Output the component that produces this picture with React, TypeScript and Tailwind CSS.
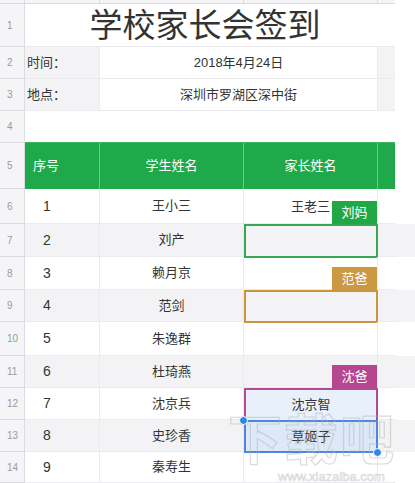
import React from 'react';

const FONT = "font-['Liberation_Sans','Noto_Sans_CJK_SC',sans-serif]";

type Row = {
  n: number;
  no: string;
  student: string;
  stripe?: boolean;
  h: string;
};

const rows: Row[] = [
  { n: 6, no: '1', student: '王小三', h: 'h-[35px]' },
  { n: 7, no: '2', student: '刘产', stripe: true, h: 'h-[33px]' },
  { n: 8, no: '3', student: '赖月京', h: 'h-[33px]' },
  { n: 9, no: '4', student: '范剑', stripe: true, h: 'h-[32px]' },
  { n: 10, no: '5', student: '朱逸群', h: 'h-[34px]' },
  { n: 11, no: '6', student: '杜琦燕', stripe: true, h: 'h-[32px]' },
  { n: 12, no: '7', student: '沈京兵', h: 'h-[32px]' },
  { n: 13, no: '8', student: '史珍香', stripe: true, h: 'h-[32px]' },
  { n: 14, no: '9', student: '秦寿生', h: 'h-[31px]' },
];

const RowHead = ({ n }: { n?: number }) => (
  <div className="w-[25px] shrink-0 bg-[#f5f5f7] border-r border-b border-[#dcdce0] flex items-center pl-[7px] text-[10px] text-[#9a9a9e]">
    {n}
  </div>
);

const Tag = ({ label, color }: { label: string; color: string }) => (
  <div className={`absolute right-0 bottom-[-1px] w-[45px] h-[23px] z-10 flex items-center justify-center text-[13px] text-white ${color}`}>
    {label}
  </div>
);

const ParentCell = ({ n }: { n: number }) => {
  const base = 'relative w-[134px] shrink-0 border-r border-b border-[#ebebee] text-[13px] text-[#333]';
  if (n === 6)
    return (
      <div className={`${base} flex items-center justify-end pr-[47px] pt-[2px]`}>
        王老三
        <Tag label="刘妈" color="bg-[#21a845]" />
      </div>
    );
  if (n === 7) return <div className={`${base} border-b-0`}><div className="absolute inset-[0_-1px_-1px_0] border-2 border-[#3aa757] bg-[#f3f3f5]" /></div>;
  if (n === 8)
    return (
      <div className={base}>
        <Tag label="范爸" color="bg-[#cb9844]" />
      </div>
    );
  if (n === 9) return <div className={`${base} border-b-0`}><div className="absolute inset-[0_-1px_-1px_0] border-2 border-[#c9963f] bg-[#f3f3f5]" /></div>;
  if (n === 11)
    return (
      <div className={base}>
        <Tag label="沈爸" color="bg-[#b6468f]" />
      </div>
    );
  if (n === 12)
    return (
      <div className={`${base} border-b-0`}>
        <div className="absolute inset-[0_-1px_0_0] border-2 border-b-0 border-[#b34b92] bg-[#e8f0fc] flex items-center justify-center">沈京智</div>
      </div>
    );
  if (n === 13)
    return (
      <div className={`${base} border-b-0`}>
        <div className="absolute inset-[0_-1px_-1px_0] border-2 border-[#4e86dc] bg-[#dde9f8] flex items-center justify-center">草姬子</div>
        <div className="absolute left-[-5px] top-[-4px] w-[9px] h-[9px] rounded-full bg-[#2f87e2] border border-white z-10" />
        <div className="absolute right-[-5px] bottom-[-5px] w-[9px] h-[9px] rounded-full bg-[#2f87e2] border border-white z-10" />
      </div>
    );
  return <div className={base} />;
};

export default function App() {
  return (
    <div className={`relative w-[415px] h-[483px] overflow-hidden bg-white ${FONT}`}>
      {/* column header strip */}
      <div className="flex h-[4px]">
        <div className="w-[25px] bg-[#f5f5f7] border-r border-b border-[#dcdce0]" />
        <div className="w-[75px] bg-[#f5f5f7] border-r border-b border-[#dcdce0]" />
        <div className="w-[144px] bg-[#f5f5f7] border-r border-b border-[#dcdce0]" />
        <div className="w-[134px] bg-[#f5f5f7] border-r border-b border-[#dcdce0]" />
        <div className="w-[17px] bg-[#f5f5f7] border-b border-[#dcdce0]" />
      </div>

      {/* row 1: title */}
      <div className="flex h-[43px]">
        <RowHead n={1} />
        <div className="w-[370px] border-b border-[#ebebee] flex items-center justify-center text-[33px] text-[#333] pr-[10px] pt-[2px]">
          学校家长会签到
        </div>
      </div>

      {/* row 2 */}
      <div className="flex h-[32px]">
        <RowHead n={2} />
        <div className="w-[75px] bg-[#f3f3f5] border-r border-b border-[#ebebee] flex items-center pl-[2px] text-[13px] text-[#333]">时间：</div>
        <div className="w-[278px] border-r border-b border-[#ebebee] flex items-center justify-center text-[13px] text-[#333]">2018年4月24日</div>
        <div className="w-[17px] bg-[#f3f3f5] border-b border-[#ebebee]" />
      </div>

      {/* row 3 */}
      <div className="flex h-[32px]">
        <RowHead n={3} />
        <div className="w-[75px] bg-[#f3f3f5] border-r border-b border-[#ebebee] flex items-center pl-[2px] text-[13px] text-[#333]">地点：</div>
        <div className="w-[278px] border-r border-b border-[#ebebee] flex items-center justify-center text-[13px] text-[#333]">深圳市罗湖区深中街</div>
        <div className="w-[17px] bg-[#f3f3f5] border-b border-[#ebebee]" />
      </div>

      {/* row 4 */}
      <div className="flex h-[32px]">
        <RowHead n={4} />
        <div className="w-[370px] border-b border-[#3fb45f]" />
      </div>

      {/* row 5: header */}
      <div className="flex h-[46px]">
        <RowHead n={5} />
        <div className="w-[75px] bg-[#1fa94b] border-r border-[#6ccc86] flex items-center pl-[8px] text-[13px] text-white">序号</div>
        <div className="w-[144px] bg-[#1fa94b] border-r border-[#6ccc86] flex items-center justify-center text-[13px] text-white">学生姓名</div>
        <div className="w-[134px] bg-[#1fa94b] border-r border-[#6ccc86] flex items-center justify-center text-[13px] text-white">家长姓名</div>
        <div className="w-[17px] bg-[#1fa94b]" />
      </div>

      {rows.map(r => (
        <div key={r.n} className={`flex ${r.h} ${r.stripe ? 'bg-[#f3f3f5]' : ''}`}>
          <RowHead n={r.n} />
          <div className="w-[75px] shrink-0 border-r border-b border-[#ebebee] flex items-center pl-[18px] text-[14px] text-[#333]">{r.no}</div>
          <div className="w-[144px] shrink-0 border-r border-b border-[#ebebee] flex items-center justify-center text-[13px] text-[#333]">{r.student}</div>
          <ParentCell n={r.n} />
          <div className="w-[17px] shrink-0 border-b border-[#ebebee]" />
        </div>
      ))}

      {/* watermark */}
      <div className="absolute left-[228px] top-[414px] pointer-events-none text-[54px] leading-none font-bold text-transparent [-webkit-text-stroke:1.2px_rgba(175,175,175,0.45)] tracking-[2px]">
        下载吧
      </div>
      <div className="absolute left-[278px] top-[470px] pointer-events-none text-[13px] leading-none text-transparent [-webkit-text-stroke:0.7px_rgba(175,175,175,0.5)]">
        www.xiazaiba.com
      </div>
    </div>
  );
}
